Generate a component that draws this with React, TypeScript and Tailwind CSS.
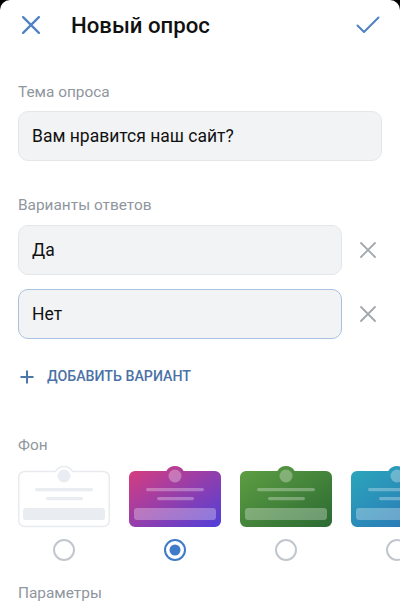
import React from "react";

const CARD_PATH =
  "M6 6 H37.34 A10 10 0 0 1 54.66 6 H86 A6 6 0 0 1 92 12 V56 A6 6 0 0 1 86 62 H6 A6 6 0 0 1 0 56 V12 A6 6 0 0 1 6 6 Z";

type CardProps = { id: string; from?: string; to?: string; white?: boolean };

function BgCard({ id, from, to, white }: CardProps) {
  const inner = white ? "#e9ecf1" : "rgba(255,255,255,0.3)";
  return (
    <svg width="92" height="63" viewBox="0 0 92 63" className="shrink-0 block">
      {!white && (
        <defs>
          <linearGradient id={id} x1="0" y1="0" x2="1" y2="1">
            <stop offset="0" stopColor={from} />
            <stop offset="1" stopColor={to} />
          </linearGradient>
        </defs>
      )}
      <path
        d={CARD_PATH}
        fill={white ? "#ffffff" : `url(#${id})`}
        stroke={white ? "#e8eaee" : "none"}
        strokeWidth={white ? 1.5 : 0}
        transform={white ? "translate(0.75 0.5) scale(0.984 0.985)" : undefined}
      />
      <circle cx="46" cy="11" r="6.5" fill={inner} />
      <rect x="17" y="23" width="58" height="3.2" rx="1.6" fill={inner} />
      <rect x="28" y="32" width="37" height="3.2" rx="1.6" fill={inner} />
      <rect x="5" y="43" width="82" height="12" rx="3" fill={inner} />
    </svg>
  );
}

function Radio({ checked }: { checked?: boolean }) {
  return (
    <div className="w-[92px] shrink-0 flex justify-center">
      <svg width="24" height="24" viewBox="0 0 24 24">
        {checked ? (
          <>
            <circle cx="12" cy="12" r="10" fill="none" stroke="#3f7bc8" strokeWidth="2" />
            <circle cx="12" cy="12" r="5.5" fill="#3f7bc8" />
          </>
        ) : (
          <circle cx="12" cy="12" r="10" fill="none" stroke="#c2c7cd" strokeWidth="2" />
        )}
      </svg>
    </div>
  );
}

function XIcon({ color, size, sw }: { color: string; size: number; sw: number }) {
  return (
    <svg width={size} height={size} viewBox="0 0 16 16">
      <path d="M1 1 L15 15 M15 1 L1 15" stroke={color} strokeWidth={sw} strokeLinecap="round" fill="none" />
    </svg>
  );
}

export default function App() {
  return (
    <div className="bg-black w-[400px] h-[613px] overflow-hidden" style={{ fontFamily: "Roboto, 'Noto Sans', sans-serif" }}>
      <div className="bg-white rounded-t-[10px] w-[400px] h-[613px] overflow-hidden">
        {/* Header */}
        <div className="h-[50px] flex items-center">
          <div className="w-[71px] flex items-center pl-[22px]">
            <XIcon color="#4f82c2" size={18} sw={2} />
          </div>
          <div className="text-[22.2px] font-medium text-[#111] leading-none">Новый опрос</div>
          <div className="ml-auto mr-[20px]">
            <svg width="24" height="18" viewBox="0 0 24 18">
              <path d="M1.5 9.5 L8 16 L22.5 1.5" stroke="#4f82c2" strokeWidth="2" fill="none" strokeLinecap="round" strokeLinejoin="round" />
            </svg>
          </div>
        </div>

        <div className="px-[18px]">
          <div className="mt-[32px] h-[20px] leading-[20px] text-[15.4px] text-[#8f969e]">Тема опроса</div>
          <div className="mt-[9px] h-[50px] rounded-[10px] bg-[#f2f3f5] border border-[#e4e6e9] flex items-center px-[13px] text-[17.5px] text-[#111]">
            Вам нравится наш сайт?
          </div>

          <div className="mt-[34px] h-[20px] leading-[20px] text-[15.4px] text-[#8f969e]">Варианты ответов</div>
          <div className="mt-[10px] flex items-center">
            <div className="w-[324px] h-[50px] rounded-[10px] bg-[#f2f3f5] border border-[#e4e6e9] flex items-center px-[13px] text-[17.5px] text-[#111]">
              Да
            </div>
            <div className="ml-[18px]">
              <XIcon color="#a3a8ae" size={16} sw={1.8} />
            </div>
          </div>
          <div className="mt-[14px] flex items-center">
            <div className="w-[324px] h-[50px] rounded-[10px] bg-[#f2f3f5] border border-[#a9c2df] flex items-center px-[13px] text-[17.5px] text-[#111]">
              Нет
            </div>
            <div className="ml-[18px]">
              <XIcon color="#a3a8ae" size={16} sw={1.8} />
            </div>
          </div>

          <div className="mt-[28px] h-[20px] flex items-center">
            <svg width="14" height="14" viewBox="0 0 14 14" className="ml-[2px]">
              <path d="M7 0.5 V13.5 M0.5 7 H13.5" stroke="#4a76a8" strokeWidth="2" fill="none" />
            </svg>
            <span className="ml-[13px] text-[14.2px] font-medium text-[#4a72a6]">ДОБАВИТЬ ВАРИАНТ</span>
          </div>

          <div className="mt-[48px] h-[20px] leading-[20px] text-[15.4px] text-[#8f969e]">Фон</div>
        </div>

        <div className="mt-[10px] pl-[18px] flex gap-[19px]">
          <BgCard id="w" white />
          <BgCard id="p" from="#dc3d7c" to="#4f3fd9" />
          <BgCard id="g" from="#5fa043" to="#2b6a33" />
          <BgCard id="b" from="#2ba8bb" to="#2a6fb6" />
        </div>
        <div className="mt-[10px] pl-[18px] flex gap-[19px]">
          <Radio />
          <Radio checked />
          <Radio />
          <Radio />
        </div>

        <div className="px-[18px] mt-[21px] h-[20px] leading-[20px] text-[15.4px] text-[#8f969e]">Параметры</div>
      </div>
    </div>
  );
}
